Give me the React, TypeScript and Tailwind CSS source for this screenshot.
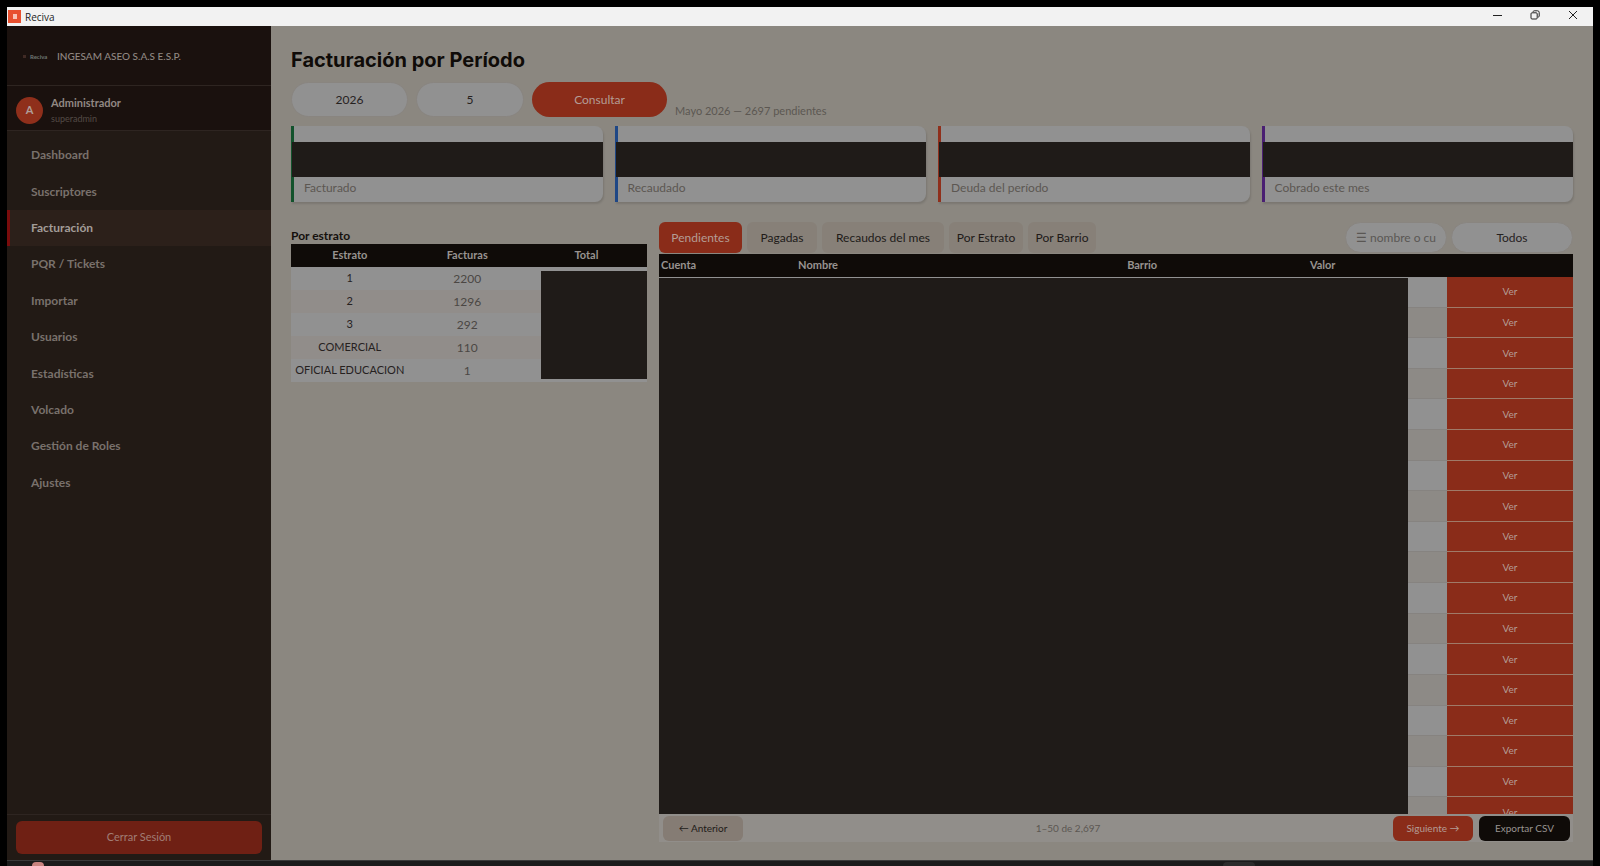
import React from "react";

const navItems = [
  "Dashboard",
  "Suscriptores",
  "Facturación",
  "PQR / Tickets",
  "Importar",
  "Usuarios",
  "Estadísticas",
  "Volcado",
  "Gestión de Roles",
  "Ajustes",
];

const cards = [
  { label: "Facturado", accent: "border-[#12522c]" },
  { label: "Recaudado", accent: "border-[#1f4785]" },
  { label: "Deuda del período", accent: "border-[#8f2f1b]" },
  { label: "Cobrado este mes", accent: "border-[#4a1f72]" },
];

const estratos = [
  { name: "1", count: 2200 },
  { name: "2", count: 1296 },
  { name: "3", count: 292 },
  { name: "COMERCIAL", count: 110 },
  { name: "OFICIAL EDUCACION", count: 1 },
];

const tabs = [
  { name: "Pendientes", width: "w-[83px]" },
  { name: "Pagadas", width: "w-[70px]" },
  { name: "Recaudos del mes", width: "w-[122px]" },
  { name: "Por Estrato", width: "w-[74px]" },
  { name: "Por Barrio", width: "w-[68px]" },
];

const rows = Array.from({ length: 18 }, (_, i) => i);

const TitleBar = () => (
  <header className="flex h-[19px] shrink-0 items-center justify-between bg-[#f2f2f2] pr-[15px]">
    <div className="flex items-center gap-1 pl-px">
      <svg width="13" height="13" viewBox="0 0 13 13">
        <rect width="13" height="13" fill="#e8502f" />
        <rect x="5" y="4" width="4" height="5" fill="#f8c3b5" />
      </svg>
      <span className="font-['Open_Sans',sans-serif] text-[10px] leading-4 text-[#222]">Reciva</span>
    </div>
    <div className="flex items-center gap-7 pb-1 text-[#222]">
      <button aria-label="Minimizar">
        <svg width="10" height="10" viewBox="0 0 10 10" stroke="currentColor">
          <path d="M1 5.5h9" />
        </svg>
      </button>
      <button aria-label="Restaurar">
        <svg width="10" height="10" viewBox="0 0 10 10" fill="none" stroke="currentColor">
          <rect x="1" y="2.8" width="6.2" height="6.2" rx="1" />
          <path d="M3 1.8Q3.200 .8 4.200 .8H7.500Q9.200 .8 9.200 2.500V6Q9.200 7 8.200 7.200" />
        </svg>
      </button>
      <button aria-label="Cerrar">
        <svg width="10" height="10" viewBox="0 0 10 10" stroke="currentColor">
          <path d="M1 1l8 8M9 1l-8 8" />
        </svg>
      </button>
    </div>
  </header>
);

const Sidebar = () => (
  <aside className="flex w-[264px] shrink-0 flex-col bg-[#221a15]">
    <div className="flex h-[60px] items-center gap-2 border-b border-[#2e2521] bg-[#1a110e] pt-0.5 pl-4 text-[10px] font-medium text-[#918883]">
      <svg width="26" height="8" viewBox="0 0 26 8">
        <rect y="2" width="3" height="3" fill="#402a24" />
        <text x="7" y="6" fontSize="6" fontWeight="700" fill="#6f7672">
          Reciva
        </text>
      </svg>
      <span>INGESAM ASEO S.A.S E.S.P.</span>
    </div>
    <div className="flex h-[45px] items-center gap-2 border-b border-[#2e2521] bg-[#1a110e] pl-[9px]">
      <div className="mt-1 flex size-[27px] items-center justify-center rounded-full bg-[#8f2f1b] text-[11px] font-bold text-[#b09e99]">
        A
      </div>
      <div className="flex flex-col pt-1.5">
        <span className="text-[11px] leading-4 font-bold text-[#918883]">Administrador</span>
        <span className="text-[9px] leading-4 text-[#544b46]">superadmin</span>
      </div>
    </div>
    <nav className="flex h-[370px] flex-col pt-1.5">
      {navItems.map((item) => (
        <a
          key={item}
          href="#"
          className={
            item === "Facturación"
              ? "flex flex-1 items-center border-l-3 border-[#7a0c0c] bg-[#2c201a] pl-[21px] text-[12px] font-bold text-[#a39c98]"
              : "flex flex-1 items-center pl-6 text-[12px] font-bold text-[#79716c]"
          }
        >
          {item}
        </a>
      ))}
    </nav>
    <div className="mt-auto border-t border-[#2e2521] px-[9px] py-1.5">
      <button className="h-[33px] w-full rounded-md bg-[#6f2014] text-[11px] text-[#a17d74]">Cerrar Sesión</button>
    </div>
  </aside>
);

const Filters = () => (
  <form className="mt-2 flex h-[35px] items-center gap-2" onSubmit={(e) => e.preventDefault()}>
    <input
      aria-label="Año"
      defaultValue="2026"
      className="h-[35px] w-[117px] rounded-full border border-[#898580] bg-[#919191] text-center text-[12px] text-[#26211f]"
    />
    <input
      aria-label="Mes"
      defaultValue="5"
      className="h-[35px] w-[108px] rounded-full border border-[#898580] bg-[#919191] text-center text-[12px] text-[#26211f]"
    />
    <button className="h-[35px] w-[135px] rounded-full bg-[#8a2c19] text-[12px] text-[#b49c95]">Consultar</button>
    <span className="self-end text-[11px] leading-3 text-[#5c5752]">Mayo 2026 — 2697 pendientes</span>
  </form>
);

const EstratoTable = () => (
  <section className="w-[356px] shrink-0 pt-1.5">
    <h2 className="text-[12px] leading-4 font-bold text-[#15100d]">Por estrato</h2>
    <div className="relative">
      <table className="w-full table-fixed text-center text-[12px]">
        <colgroup>
          <col className="w-[33%]" />
          <col className="w-[33%]" />
          <col />
        </colgroup>
        <thead className="bg-[#0f0b08] text-[11px] text-[#989390]">
          <tr className="h-[23px]">
            <th className="p-0 font-bold">Estrato</th>
            <th className="p-0 font-bold">Facturas</th>
            <th className="p-0 font-bold">Total</th>
          </tr>
        </thead>
        <tbody>
          {estratos.map((e) => (
            <tr key={e.name} className="h-[23px] bg-[#919191] even:bg-[#918d8a]">
              <td className="p-0 text-[11px] whitespace-nowrap text-[#26211f]">{e.name}</td>
              <td className="p-0 text-[#4b4744]">{e.count}</td>
              <td className="p-0" />
            </tr>
          ))}
        </tbody>
      </table>
      <div className="absolute top-[27px] right-0 h-[108px] w-[106px] bg-[#1f1b18]" />
    </div>
  </section>
);

const Invoices = () => (
  <section className="flex min-w-0 flex-1 flex-col">
    <div className="flex h-8 shrink-0 justify-between">
      <div className="flex gap-[5px]">
        {tabs.map((tab, i) => (
          <button
            key={tab.name}
            className={`${tab.width} h-[31px] rounded-md text-[12px] whitespace-nowrap ${
              i === 0 ? "bg-[#8a2c19] text-[#b49c95]" : "bg-[#878078] text-[#211b18]"
            }`}
          >
            {tab.name}
          </button>
        ))}
      </div>
      <div className="flex gap-1">
        <input
          aria-label="Buscar"
          placeholder="☰ nombre o cuenta"
          className="h-[31px] w-[102px] rounded-full border border-[#898580] bg-[#919191] px-2.5 text-[12px] placeholder:text-[#5a5754]"
        />
        <select
          aria-label="Barrio"
          className="h-[31px] w-[122px] appearance-none rounded-full border border-[#898580] bg-[#919191] text-center text-[12px] text-[#26211f]"
        >
          <option>Todos</option>
        </select>
      </div>
    </div>
    <div className="relative min-h-0 flex-1 overflow-hidden">
      <table className="h-[574px] w-full table-fixed text-left text-[11px]">
        <colgroup>
          <col className="w-[15%]" />
          <col className="w-[36%]" />
          <col className="w-[20%]" />
          <col />
          <col className="w-[126px]" />
        </colgroup>
        <thead className="bg-[#0f0b08] text-[#989390]">
          <tr className="h-[23px]">
            <th className="p-0 pl-0.5 font-bold">Cuenta</th>
            <th className="p-0 pl-0.5 font-bold">Nombre</th>
            <th className="p-0 pl-0.5 font-bold">Barrio</th>
            <th className="p-0 pl-0.5 font-bold">Valor</th>
            <th className="p-0" />
          </tr>
        </thead>
        <tbody>
          {rows.map((row) => (
            <tr key={row} className="border-b border-[#a07a68] bg-[#919191] even:bg-[#8d8a86]">
              <td colSpan={4} className="border-b border-[#868380] p-0" />
              <td className="p-0">
                <button className="block h-full min-h-[29px] w-full bg-[#8a2c19] text-[10px] text-[#b49c95]">Ver</button>
              </td>
            </tr>
          ))}
        </tbody>
      </table>
      <div className="absolute top-6 bottom-0 left-0 w-[82%] bg-[#1f1b18]" />
    </div>
    <footer className="flex h-7 shrink-0 items-center justify-between bg-[#918e8a] pr-[3px] pl-1 text-[10px]">
      <button className="h-[25px] w-20 rounded-md bg-[#857c74] text-[#211b18]">← Anterior</button>
      <span className="text-[#5c5752]">1–50 de 2,697</span>
      <div className="flex gap-1.5">
        <button className="h-[25px] w-20 rounded-md bg-[#8a2c19] text-[#b49c95]">Siguiente →</button>
        <button className="h-[25px] w-[91px] rounded-md bg-[#0f0b08] text-[#989390]">Exportar CSV</button>
      </div>
    </footer>
  </section>
);

const App = () => {
  return (
    <div className="flex h-screen flex-col bg-black px-[7px] pt-[7px] font-[Lato,'Open_Sans',sans-serif]">
      <TitleBar />
      <div className="flex min-h-0 flex-1">
        <Sidebar />
        <main className="flex min-w-0 flex-1 flex-col bg-[#8b8780] px-5 pt-5 pb-[18px]">
          <h1 className="font-[Inter,sans-serif] text-[20px] leading-7 font-bold text-[#0f0b08]">
            Facturación por Período
          </h1>
          <Filters />
          <div className="mt-[9px] grid grid-cols-4 gap-3">
            {cards.map((card) => (
              <div
                key={card.label}
                className={`h-[76px] rounded-r-lg border-l-3 bg-[#919191] pt-4 shadow-[1px_2px_2px_rgba(0,0,0,0.12)] ${card.accent}`}
              >
                <div className="-ml-0.5 h-[35px] bg-[#1f1b18]" />
                <p className="pt-[3px] pl-2.5 text-[12px] leading-4 text-[#5c5752]">{card.label}</p>
              </div>
            ))}
          </div>
          <div className="mt-5 flex min-h-0 flex-1 gap-3">
            <EstratoTable />
            <Invoices />
          </div>
        </main>
      </div>
      <div className="flex h-1.5 shrink-0 items-end justify-between overflow-hidden border-t border-[#3a3a3a] bg-[#1b1b1b] pr-[338px] pl-[25px]">
        <div className="h-1 w-3 rounded-t-full bg-[#c98480]" />
        <div className="h-1 w-8 rounded-t-sm bg-[#2b2b2b]" />
      </div>
    </div>
  );
};

export default App;
